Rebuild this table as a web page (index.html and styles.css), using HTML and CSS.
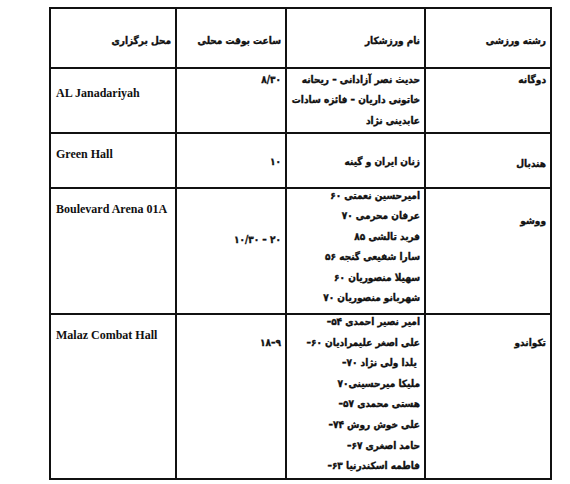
FILE: index.html
```html
<!DOCTYPE html>
<html lang="fa">
<head>
<meta charset="utf-8">
<title>برنامه مسابقات</title>
<link rel="stylesheet" href="styles.css">
</head>
<body>
<table class="schedule" dir="rtl">
  <colgroup>
    <col class="c-sport">
    <col class="c-names">
    <col class="c-time">
    <col class="c-place">
  </colgroup>
  <thead>
    <tr class="row-head">
      <th>رشته ورزشی</th>
      <th>نام ورزشکار</th>
      <th>ساعت بوقت محلی</th>
      <th>محل برگزاری</th>
    </tr>
  </thead>
  <tbody>
    <tr class="row-1">
      <td class="off-1">دوگانه</td>
      <td class="off-1 names">حدیث نصر آزادانی – ریحانه<br>خاتونی داریان – فائزه سادات<br>عابدینی نژاد</td>
      <td class="off-1">۸/۳۰</td>
      <td class="place off-14" dir="ltr">AL Janadariyah</td>
    </tr>
    <tr class="row-2">
      <td class="off-20">هندبال</td>
      <td class="off-18 names">زنان ایران و گینه</td>
      <td class="off-18">۱۰</td>
      <td class="place off-10" dir="ltr">Green Hall</td>
    </tr>
    <tr class="row-3">
      <td class="off-22">ووشو</td>
      <td class="off-0 names tight">امیرحسین نعمتی ۶۰<br>عرفان محرمی ۷۰<br>فربد تالشی ۸۵<br>سارا شفیعی گنجه ۵۶<br>سهیلا منصوریان ۶۰<br>شهربانو منصوریان ۷۰</td>
      <td class="off-41">۲۰ – ۱۰/۳۰</td>
      <td class="place off-10" dir="ltr">Boulevard Arena 01A</td>
    </tr>
    <tr class="row-4">
      <td class="off-18">تکواندو</td>
      <td class="off-0 names tight loose">امیر نصیر احمدی ۵۴–<br>علی اصغر علیمرادیان ۶۰–<br>&nbsp;یلدا ولی نژاد ۷۰–<br>ملیکا میرحسینی۷۰<br>هستی محمدی ۵۷–<br>علی خوش روش ۷۴–<br>حامد اصغری ۶۷–<br>فاطمه اسکندرنیا ۶۳–</td>
      <td class="off-18">۹–۱۸</td>
      <td class="place off-10" dir="ltr">Malaz Combat Hall</td>
    </tr>
  </tbody>
</table>
</body>
</html>
```

FILE: styles.css
```css
html, body {
  margin: 0;
  padding: 0;
  background: #ffffff;
}

body {
  padding: 7px 0 0 49px;
}

.schedule {
  border-collapse: collapse;
  table-layout: fixed;
  width: 501px;
  font-family: "DejaVu Sans Condensed", "DejaVu Sans", sans-serif;
  font-stretch: condensed;
  font-weight: bold;
  font-size: 10px;
  line-height: 20.4px;
  color: #111111;
  -webkit-text-stroke: 0.35px #111111;
}

.c-sport { width: 126px; }
.c-names { width: 139px; }
.c-time  { width: 110px; }
.c-place { width: 126px; }

.schedule th,
.schedule td {
  border: 2px solid #111111;
  vertical-align: top;
  text-align: right;
  padding: 0 4px 0 4px;
  white-space: nowrap;
  overflow: hidden;
}

.schedule th {
  font-weight: bold;
  padding-top: 22px;
}

.row-head { height: 60px; }
.row-1 { height: 65px; }
.row-2 { height: 55px; }
.row-3 { height: 126px; }
.row-4 { height: 165px; }

.schedule td.place {
  text-align: left;
  padding-left: 5px;
  font-family: "Liberation Serif", serif;
  font-stretch: normal;
  font-size: 12px;
  -webkit-text-stroke: 0;
}

.loose { line-height: 20.6px; }

.tight::before {
  content: "";
  display: block;
  margin-top: -3px;
}

.schedule td.off-0  { padding-top: 0; }
.schedule td.off-1  { padding-top: 1px; }
.schedule td.off-10 { padding-top: 10px; }
.schedule td.off-14 { padding-top: 14px; }
.schedule td.off-18 { padding-top: 18px; }
.schedule td.off-20 { padding-top: 20px; }
.schedule td.off-22 { padding-top: 22px; }
.schedule td.off-41 { padding-top: 41px; }
```
